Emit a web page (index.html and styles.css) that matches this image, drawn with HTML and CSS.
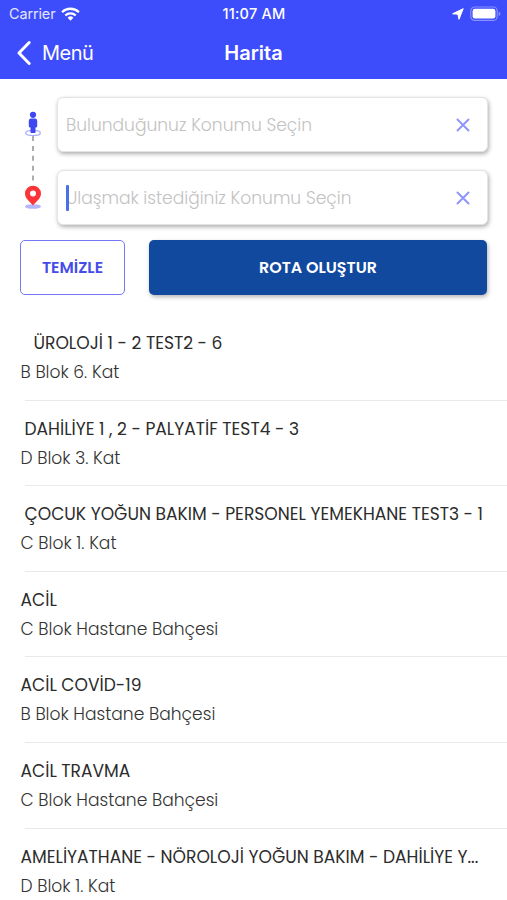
FILE: index.html
```html
<!DOCTYPE html>
<html lang="tr">
<head>
<meta charset="utf-8">
<title>Harita</title>
<link rel="stylesheet" href="styles.css">
</head>
<body>
<header class="header">
  <div class="status">
    <div class="carrier"><span>Carrier</span>
      <svg class="wifi" width="19" height="14" viewBox="0 0 19 14"><g fill="none" stroke="#fff" stroke-width="2.3"><path d="M1.1 5.2a12 12 0 0 1 16.8 0"/><path d="M4.3 8.5a7.4 7.4 0 0 1 10.4 0"/></g><path d="M6.6 10.7a4.2 4.2 0 0 1 5.8 0L9.5 13.7z" fill="#fff"/></svg>
    </div>
    <div class="clock">11:07 AM</div>
    <div class="power">
      <svg width="12" height="12" viewBox="0 0 12 12"><path d="M11.2.7 7 11.3 5.9 6.2.6 5.8z" fill="#fff" stroke="#fff" stroke-width="1" stroke-linejoin="round"/></svg>
      <svg width="31" height="16" viewBox="0 0 31 16"><rect x=".8" y="1" width="26.4" height="13.4" rx="4" fill="none" stroke="#8890ff" stroke-width="1.2"/><rect x="2.6" y="2.8" width="22.8" height="9.8" rx="2.4" fill="#fff"/><path d="M28.6 5.4q1.9.6 1.9 2.3t-1.9 2.3z" fill="#8890ff"/></svg>
    </div>
  </div>
  <nav class="nav">
    <a class="back"><svg width="16" height="26" viewBox="0 0 16 26"><path d="M13.2 2.5 3 13l10.2 10.5" fill="none" stroke="#fff" stroke-width="3" stroke-linecap="round" stroke-linejoin="round"/></svg><span>Menü</span></a>
    <h1>Harita</h1>
  </nav>
</header>
<main>
  <section class="route">
    <svg class="trail" width="18" height="100" viewBox="0 0 18 100">
      <ellipse cx="9" cy="22" rx="7.3" ry="2.6" fill="none" stroke="#a9adff" stroke-width="1.3"/>
      <circle cx="9" cy="3.8" r="3.1" fill="#3f48f0"/>
      <path d="M7 7.5h4q2.200 0 2.200 2.200v5.500q0 1.200-1.700 1.200v4.800q0 .8-.8.8H7.300q-.8 0-.8-.8v-4.800q-1.700 0-1.700-1.200V9.700q0-2.200 2.200-2.200z" fill="#3f48f0"/>
      <path d="M9 25v45" stroke="#a9a9a9" stroke-width="1.9" stroke-dasharray="5 4.900"/>
      <ellipse cx="9" cy="95.500" rx="8" ry="2.300" fill="#b3b6fb"/>
      <path d="M9 94.500C6.500 91 1 87.700 1 82.700a8 8 0 0 1 16 0C17 87.700 11.500 91 9 94.500z" fill="#fb3438"/>
      <circle cx="9" cy="82.500" r="3" fill="#fff"/>
    </svg>
    <div class="fields">
      <div class="field"><span class="hint">Bulunduğunuz Konumu Seçin</span><svg class="clear" width="14" height="14" viewBox="0 0 14 14"><path d="m1.500 1.500 11 11m0-11-11 11"/></svg></div>
      <div class="field"><i class="caret"></i><span class="hint">Ulaşmak istediğiniz Konumu Seçin</span><svg class="clear" width="14" height="14" viewBox="0 0 14 14"><path d="m1.500 1.500 11 11m0-11-11 11"/></svg></div>
    </div>
  </section>
  <div class="actions">
    <button class="reset">TEMİZLE</button>
    <button class="create">ROTA OLUŞTUR</button>
  </div>
  <ul class="places">
    <li><h2 class="indent-2">ÜROLOJİ 1 - 2 TEST2 - 6</h2><p>B Blok 6. Kat</p></li>
    <li><h2 class="indent-1">DAHİLİYE 1 , 2 - PALYATİF TEST4 - 3</h2><p>D Blok 3. Kat</p></li>
    <li><h2 class="indent-1">ÇOCUK YOĞUN BAKIM - PERSONEL YEMEKHANE TEST3 - 1</h2><p>C Blok 1. Kat</p></li>
    <li><h2>ACİL</h2><p>C Blok Hastane Bahçesi</p></li>
    <li><h2>ACİL COVİD-19</h2><p>B Blok Hastane Bahçesi</p></li>
    <li><h2>ACİL TRAVMA</h2><p>C Blok Hastane Bahçesi</p></li>
    <li><h2>AMELİYATHANE - NÖROLOJİ YOĞUN BAKIM - DAHİLİYE Y...</h2><p>D Blok 1. Kat</p></li>
  </ul>
</main>
</body>
</html>
```
FILE: styles.css
```css
* { box-sizing: border-box; }
body { margin: 0; height: 900px; overflow: hidden; background: #fff; color: #333; font-family: Poppins, Lato, sans-serif; }
svg { display: block; flex: none; }
.header { height: 79px; background: #3d4dfc; color: #fff; font-family: Inter, sans-serif; }
.status { height: 27px; display: grid; grid-template-columns: 1fr auto 1fr; align-items: center; padding: 0 6px 0 9px; font-size: 14.400px; }
.carrier, .power { display: flex; align-items: center; }
.carrier { gap: 6px; color: #e4e6ff; }
.carrier span { letter-spacing: -.1px; }
.power { justify-content: flex-end; gap: 6px; }
.clock { font-weight: 500; font-size: 14.500px; letter-spacing: .25px; margin-left: -2px; }
.nav { height: 52px; display: grid; grid-template-columns: 1fr auto 1fr; align-items: center; padding: 0 16px; }
.back { display: flex; align-items: center; gap: 10px; font-size: 20px; }
.back span { letter-spacing: -.5px; }
.nav h1 { margin: 0; font-size: 20px; font-weight: 600; }
.route { display: flex; padding: 18px 19px 0 24px; }
.trail { margin-top: 14px; }
.fields { flex: 1; margin-left: 15px; display: grid; gap: 18px; }
.field { height: 55px; display: flex; align-items: center; padding: 0 17px 0 8px; border: 1px solid #e4e4e4; border-radius: 6px; background: #fff; box-shadow: 1px 2px 4px rgba(0,0,0,.32); }
.hint { flex: 1; color: #c2c2c2; font-size: 17.100px; font-weight: 300; white-space: nowrap; }
.caret { width: 3px; height: 26px; margin-right: -3px; border-radius: 1px; background: #4a70e8; z-index: 1; }
.clear path { fill: none; stroke: #8f96fb; stroke-width: 2; stroke-linecap: round; }
.actions { display: flex; gap: 24px; padding: 15px 20px 0; }
.actions button { height: 55px; border-radius: 5px; font: 600 15.900px Poppins, Lato, sans-serif; padding: 0; }
.reset { width: 105px; background: #fff; border: 1.500px solid #7478f5; color: #454ce8; }
.create { flex: 1; background: #11499f; border: 0; color: #fff; box-shadow: 1px 2px 4px rgba(0,0,0,.3); }
.places { list-style: none; margin: 19px 0 0; padding: 0; }
.places li { position: relative; height: 85.600px; padding: 15px 20px 0 20.500px; }
.places li::after { content: ""; position: absolute; left: 25px; right: 0; bottom: -1px; height: 1px; background: #e9e9e9; }
.places h2 { margin: 0; height: 29px; line-height: 29px; font-size: 17.100px; font-weight: 400; white-space: nowrap; color: #2c2c2c; }
.places p { margin: 0; height: 29px; line-height: 29px; font-size: 17.100px; font-weight: 300; color: #333; }
.indent-1 { padding-left: 4px; }
.indent-2 { padding-left: 13px; }
```
